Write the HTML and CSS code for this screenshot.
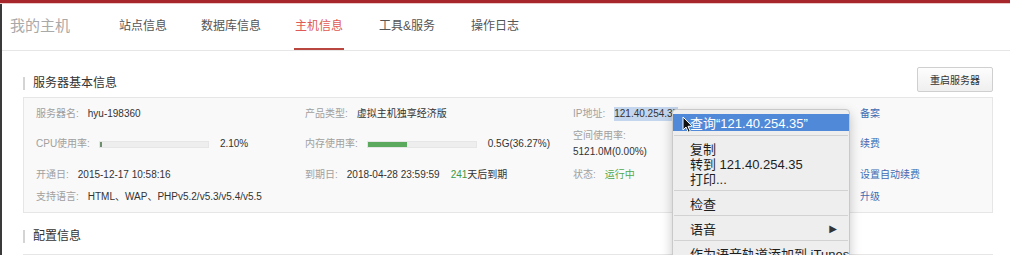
FILE: index.html
```html
<!DOCTYPE html>
<html lang="zh-CN">
<head>
  <meta charset="UTF-8" />
  <title>我的主机 - 主机信息</title>
  <link rel="stylesheet" href="styles.css">
</head>
<body>
  <div class="topbar"></div>
  <div class="page">
    <nav class="header">
      <div class="logo">我的主机</div>
      <div class="nav-links">
        <a href="#"><span>站点信息</span></a>
        <a href="#"><span>数据库信息</span></a>
        <a href="#" class="active"><span>主机信息</span></a>
        <a href="#"><span>工具&amp;服务</span></a>
        <a href="#"><span>操作日志</span></a>
      </div>
    </nav>

    <main class="main">
      <div class="section-head">
        <h2 class="section-title">服务器基本信息</h2>
        <button class="btn">重启服务器</button>
      </div>

      <div class="panel info-grid">
        <div class="cell"><span class="label">服务器名:</span><span class="value">hyu-198360</span></div>
        <div class="cell"><span class="label">产品类型:</span><span class="value">虚拟主机独享经济版</span></div>
        <div class="cell"><span class="label">IP地址:</span><span class="value selected">121.40.254.35</span></div>
        <div class="cell"><a class="link" href="#">备案</a></div>

        <div class="cell">
          <span class="label">CPU使用率:</span>
          <span class="bar"><span class="bar-fill dark" style="width: 2%"></span></span>
          <span class="value">2.10%</span>
        </div>
        <div class="cell">
          <span class="label">内存使用率:</span>
          <span class="bar"><span class="bar-fill" style="width: 36.27%"></span></span>
          <span class="value">0.5G(36.27%)</span>
        </div>
        <div class="cell stack">
          <span class="label">空间使用率:</span>
          <span class="value">5121.0M(0.00%)</span>
        </div>
        <div class="cell"><a class="link" href="#">续费</a></div>

        <div class="cell"><span class="label">开通日:</span><span class="value">2015-12-17 10:58:16</span></div>
        <div class="cell">
          <span class="label">到期日:</span><span class="value">2018-04-28 23:59:59</span>
          <span class="value remain"><em>241</em>天后到期</span>
        </div>
        <div class="cell"><span class="label">状态:</span><span class="value ok">运行中</span></div>
        <div class="cell"><a class="link" href="#">设置自动续费</a></div>

        <div class="cell wide"><span class="label">支持语言:</span><span class="value">HTML、WAP、PHPv5.2/v5.3/v5.4/v5.5</span></div>
        <div class="cell"><a class="link" href="#">升级</a></div>
      </div>

      <div class="section-head second">
        <h2 class="section-title">配置信息</h2>
      </div>
      <div class="panel empty"></div>
    </main>
  </div>

  <!-- context menu opened on the IP address -->
  <div class="context-menu">
    <div class="menu-item hover">查询“121.40.254.35”</div>
    <div class="menu-sep"></div>
    <div class="menu-item">复制</div>
    <div class="menu-item">转到 121.40.254.35</div>
    <div class="menu-item">打印...</div>
    <div class="menu-sep"></div>
    <div class="menu-item">检查</div>
    <div class="menu-sep"></div>
    <div class="menu-item">语音<span class="arrow">▶</span></div>
    <div class="menu-sep"></div>
    <div class="menu-item">作为语音轨道添加到 iTunes</div>
  </div>

  <svg class="cursor" width="12" height="18" viewBox="0 0 12 18">
    <path d="M1 1 L1 14 L4 11 L6.3 16.2 L8.3 15.3 L6 10.3 L10.2 10.3 Z" fill="#111" stroke="#fff" stroke-width="1" stroke-linejoin="round"/>
  </svg>
</body>
</html>
```

FILE: styles.css
```css
* {
  margin: 0;
  padding: 0;
  box-sizing: border-box;
}

html, body {
  height: 100%;
  overflow: hidden;
  background: #fff;
  font-family: "Liberation Sans", "Noto Sans CJK SC", sans-serif;
  color: #333;
}

.topbar {
  height: 4px;
  background: #a6262b;
  border-bottom: 1px solid #ecc9c9;
}

.page {
  border-left: 2px solid #3a3a3a;
  min-height: 100%;
}

/* header nav */
.header {
  display: flex;
  height: 47px;
  border-bottom: 1px solid #e6e6e6;
}

.logo {
  width: 60px;
  margin: 0 29px 0 8px;
  font-size: 15px;
  line-height: 44px;
  color: #a9a9a9;
  white-space: nowrap;
}

.nav-links {
  display: flex;
}

.nav-links a {
  display: flex;
  justify-content: center;
  width: 88px;
  height: 100%;
  color: #555;
  font-size: 12px;
  text-decoration: none;
}

.nav-links a span {
  display: block;
  height: 100%;
  padding: 15px 1px 0;
  line-height: 14px;
}

.nav-links a.active {
  color: #e05a55;
}

.nav-links a.active span {
  border-bottom: 2px solid #b9473f;
}

/* content */
.main {
  padding: 0 17px 0 21px;
}

.section-head {
  display: flex;
  justify-content: space-between;
  align-items: flex-end;
  margin-top: 16px;
  margin-bottom: 5px;
}

.section-title {
  font-size: 12px;
  font-weight: normal;
  line-height: 13px;
  padding-left: 8px;
  margin-bottom: 2px;
  border-left: 2px solid #d4d4d4;
  color: #333;
}

.section-head.second {
  margin-top: 17px;
  margin-bottom: 9px;
}

.btn {
  width: 76px;
  height: 25px;
  border: 1px solid #cfcfcf;
  border-radius: 2px;
  background: linear-gradient(#fdfdfd, #efefef);
  font-family: inherit;
  font-size: 10px;
  color: #333;
}

.panel {
  border: 1px solid #e6e6e6;
  background: #f9f9f9;
}

.info-grid {
  display: grid;
  grid-template-columns: 269px 268px 287px 1fr;
  grid-template-rows: 31px 30px 31px 14px;
  align-items: center;
  padding: 0 0 8px 12px;
  font-size: 10px;
  line-height: 14px;
}

.cell {
  display: flex;
  align-items: center;
  white-space: nowrap;
}

.cell.stack {
  flex-direction: column;
  align-items: flex-start;
  line-height: 16px;
}

.cell.wide {
  grid-column: 1 / 4;
}

.label {
  color: #a0a0a0;
  margin-right: 9px;
}

.cell.stack .label {
  margin-right: 0;
}

.value {
  color: #333;
}

.selected {
  background: #c4d6ee;
}

.ok {
  color: #4faa4f;
}

.remain {
  margin-left: 11px;
}

.remain em {
  font-style: normal;
  color: #3d9a45;
}

.bar {
  display: block;
  width: 110px;
  height: 7px;
  margin-right: 11px;
  background: #eeeeee;
  border: 1px solid #e6e6e6;
}

.bar-fill {
  display: block;
  height: 100%;
  background: #5aa95c;
}

.bar-fill.dark {
  background: #6d8f6d;
}

.link {
  color: #3d6cb3;
  text-decoration: none;
}

.panel.empty {
  height: 60px;
  background: #fafafa;
}

/* macOS style right-click menu, floats over the page */
.context-menu {
  position: absolute;
  left: 672px;
  top: 109px;
  width: 178px;
  height: 170px;
  padding-top: 4px;
  background: #eeeeee;
  border: 1px solid #c9c9c9;
  border-radius: 4px;
  box-shadow: 0 4px 12px rgba(0, 0, 0, 0.22);
  font-size: 13px;
  color: #1e1e1e;
}

.menu-item {
  display: flex;
  align-items: center;
  height: 15px;
  padding-left: 17px;
  padding-right: 12px;
  white-space: nowrap;
  overflow: hidden;
}

.menu-item.hover {
  height: 17px;
  background: #4f89d8;
  color: #fff;
}

.menu-sep {
  height: 10px;
  margin: 0 1px;
  border-bottom: 5px solid transparent;
  border-top: 4px solid transparent;
  background: #d2d2d2;
  background-clip: padding-box;
}

.arrow {
  margin-left: auto;
  font-family: "DejaVu Sans", sans-serif;
  font-size: 10px;
  color: #333;
}

.cursor {
  position: absolute;
  left: 682px;
  top: 116px;
}
```
